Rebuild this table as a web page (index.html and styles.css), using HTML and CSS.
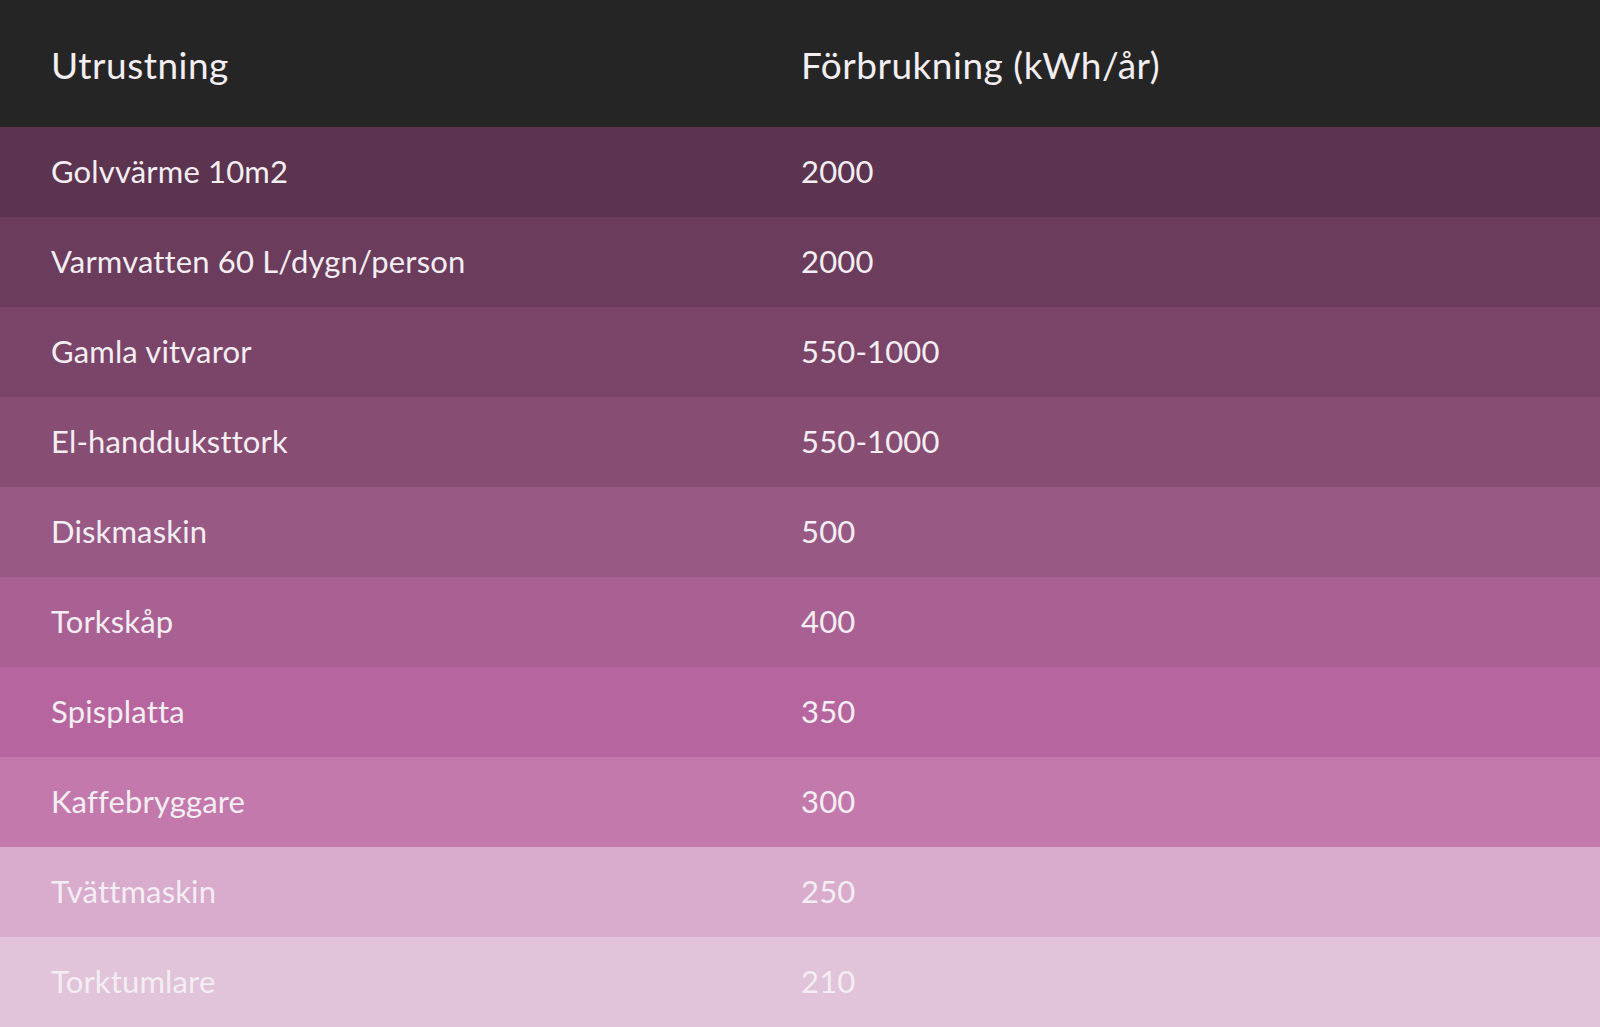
FILE: index.html
```html
<!DOCTYPE html>
<html lang="sv">
<head>
<meta charset="utf-8">
<title>Förbrukning</title>
<link rel="stylesheet" href="styles.css">
</head>
<body>
<div class="table">
  <div class="row head"><div class="cell">Utrustning</div><div class="cell">Förbrukning (kWh/år)</div></div>
  <div class="row r1"><div class="cell">Golvvärme 10m2</div><div class="cell">2000</div></div>
  <div class="row r2"><div class="cell">Varmvatten 60 L/dygn/person</div><div class="cell">2000</div></div>
  <div class="row r3"><div class="cell">Gamla vitvaror</div><div class="cell">550-1000</div></div>
  <div class="row r4"><div class="cell">El-handduksttork</div><div class="cell">550-1000</div></div>
  <div class="row r5"><div class="cell">Diskmaskin</div><div class="cell">500</div></div>
  <div class="row r6"><div class="cell">Torkskåp</div><div class="cell">400</div></div>
  <div class="row r7"><div class="cell">Spisplatta</div><div class="cell">350</div></div>
  <div class="row r8"><div class="cell">Kaffebryggare</div><div class="cell">300</div></div>
  <div class="row r9"><div class="cell">Tvättmaskin</div><div class="cell">250</div></div>
  <div class="row r10"><div class="cell">Torktumlare</div><div class="cell">210</div></div>
</div>
</body>
</html>
```

FILE: styles.css
```css
html, body {
  margin: 0;
  padding: 0;
  background: #252525;
}
body {
  font-family: "Lato", "Noto Sans", sans-serif;
  color: #f3eef2;
  overflow: hidden;
}
.table {
  display: flex;
  flex-direction: column;
  width: 1600px;
}
.row {
  display: grid;
  grid-template-columns: 750px 1fr;
  height: 90px;
  align-items: center;
  padding-left: 51px;
  padding-bottom: 2px;
  box-sizing: border-box;
  font-size: 31px;
  letter-spacing: 0.15px;
}
.head {
  height: 127px;
  background: #252525;
  font-size: 37px;
  padding-bottom: 0;
  padding-top: 2px;
  letter-spacing: 0.5px;
}
.r1 { background: #5c344f; }
.r2 { background: #6b3c5c; }
.r3 { background: #7a4569; }
.r4 { background: #874d73; }
.r5 { background: #985984; }
.r6 { background: #a96193; }
.r7 { background: #b7659e; }
.r8 { background: #c479ad; }
.r9 { background: #d9abcd; }
.r10 { background: #e1c3da; }
```
